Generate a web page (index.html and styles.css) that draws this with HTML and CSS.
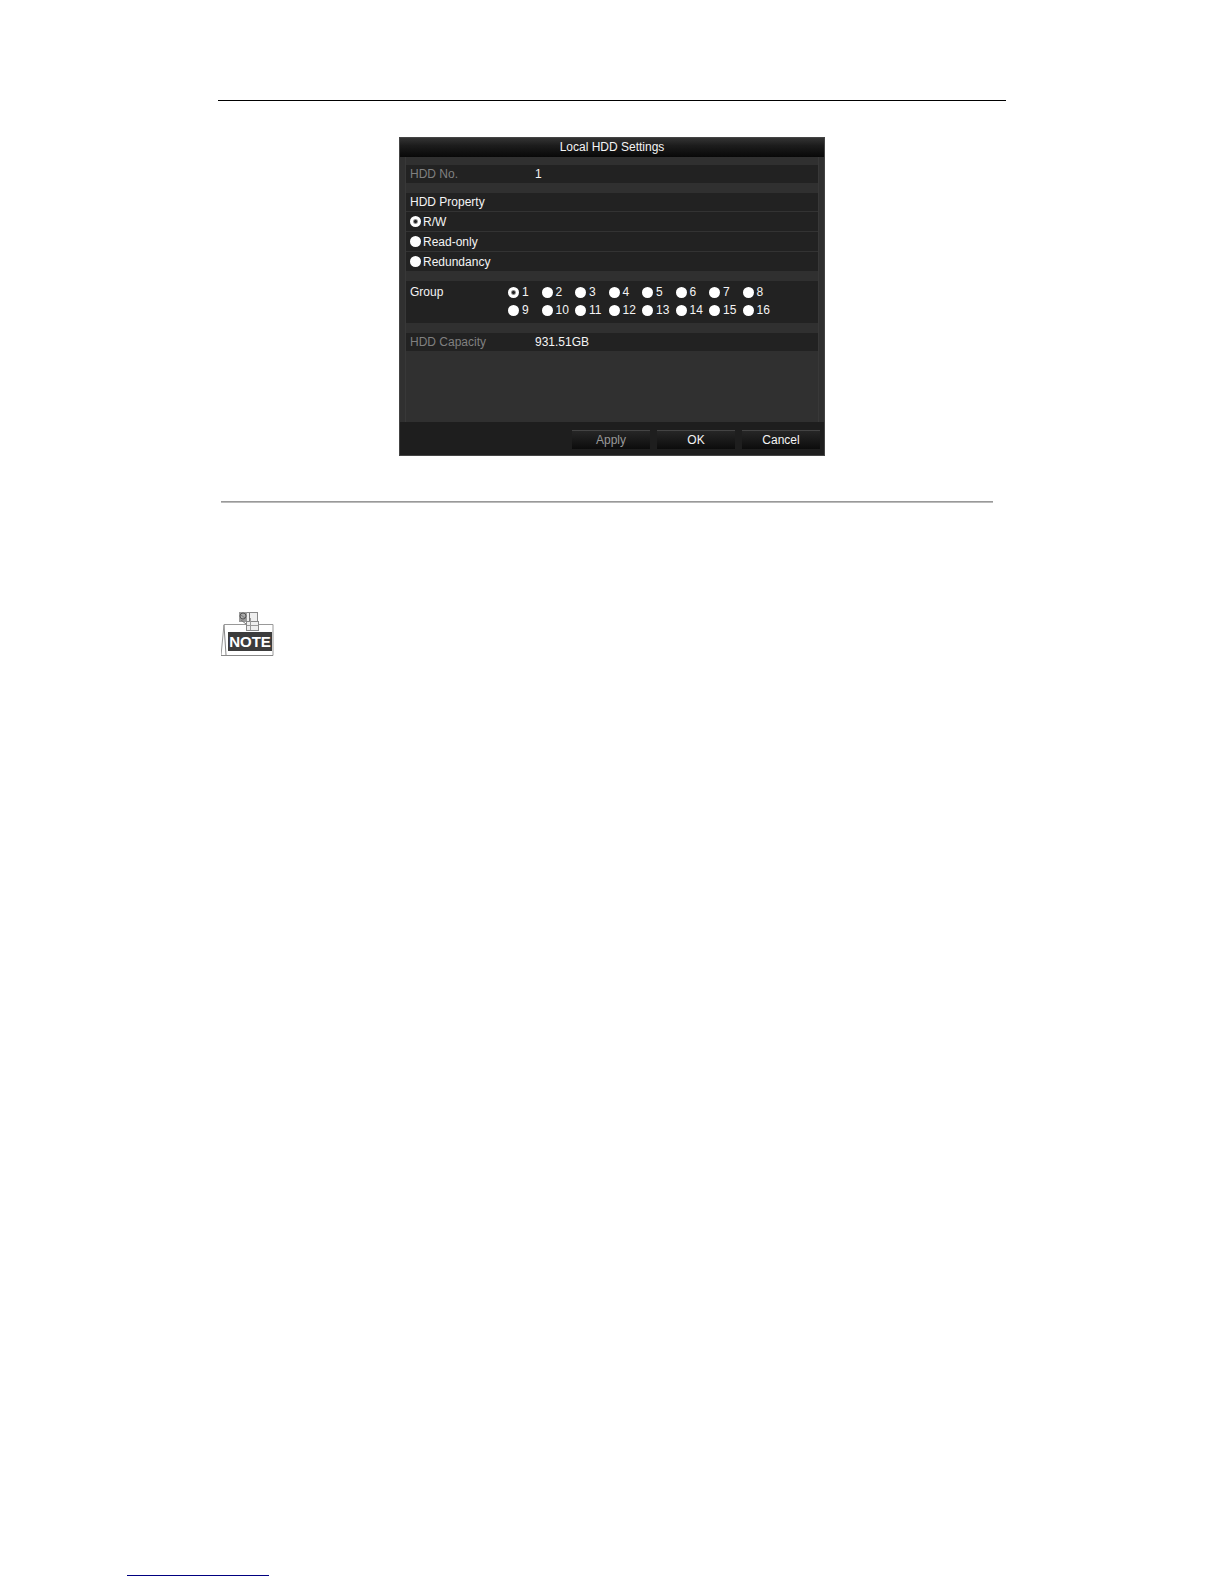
FILE: index.html
```html
<!DOCTYPE html>
<html lang="en">
<head>
    <meta charset="UTF-8">
    <meta name="viewport" content="width=device-width, initial-scale=1.0">
    <title>Local HDD Settings</title>
    <link rel="stylesheet" href="styles.css">
</head>
<body>
    <main class="page">
        <hr class="top-rule">

        <!-- Settings dialog -->
        <form class="dialog">
            <h1 class="dialog-title">Local HDD Settings</h1>

            <div class="dialog-body">
                <div class="panel row">
                    <span class="label muted">HDD No.</span>
                    <span>1</span>
                </div>

                <div class="panel property" role="radiogroup" aria-labelledby="propertyLabel">
                    <div class="row" id="propertyLabel">HDD Property</div>
                    <label class="row"><input type="radio" name="property" checked>R/W</label>
                    <label class="row"><input type="radio" name="property">Read-only</label>
                    <label class="row"><input type="radio" name="property">Redundancy</label>
                </div>

                <div class="panel group" role="radiogroup" aria-labelledby="groupLabel">
                    <span class="group-label" id="groupLabel">Group</span>
                    <div class="group-options">
                        <label><input type="radio" name="group" checked>1</label>
                        <label><input type="radio" name="group">2</label>
                        <label><input type="radio" name="group">3</label>
                        <label><input type="radio" name="group">4</label>
                        <label><input type="radio" name="group">5</label>
                        <label><input type="radio" name="group">6</label>
                        <label><input type="radio" name="group">7</label>
                        <label><input type="radio" name="group">8</label>
                        <label><input type="radio" name="group">9</label>
                        <label><input type="radio" name="group">10</label>
                        <label><input type="radio" name="group">11</label>
                        <label><input type="radio" name="group">12</label>
                        <label><input type="radio" name="group">13</label>
                        <label><input type="radio" name="group">14</label>
                        <label><input type="radio" name="group">15</label>
                        <label><input type="radio" name="group">16</label>
                    </div>
                </div>

                <div class="panel row">
                    <span class="label muted">HDD Capacity</span>
                    <span>931.51GB</span>
                </div>
            </div>

            <div class="dialog-footer">
                <button type="button" disabled>Apply</button>
                <button type="button">OK</button>
                <button type="button">Cancel</button>
            </div>
        </form>

        <hr class="section-rule">

        <!-- Note sign -->
        <svg class="note" width="54" height="46" viewBox="0 0 54 46" role="img" aria-label="Note">
            <path d="M3 13.500H52V44.500H0L3 13.500Z" fill="#fff" stroke="#999"/>
            <path d="M3 14L5 44M0 44.500H52" fill="none" stroke="#888"/>
            <rect x="7" y="21" width="44" height="19" fill="#3c3c3c"/>
            <rect x="18.500" y="1.500" width="18" height="9" fill="#eee" stroke="#888"/>
            <rect x="18" y="1" width="8" height="10" fill="#999"/>
            <circle cx="22" cy="5" r="3" fill="#aaa" stroke="#555"/>
            <path d="M20 4L24 7M28.500 2V10M20 9L25 13" fill="none" stroke="#777"/>
            <rect x="25.500" y="10.500" width="12" height="9" fill="#eee" stroke="#888"/>
            <path d="M29.500 7V19M26 14.500H37" fill="none" stroke="#999"/>
            <text x="29" y="36" text-anchor="middle">NOTE</text>
        </svg>
    </main>

    <footer class="page-footer">
        <hr class="footer-rule">
    </footer>
</body>
</html>
```

FILE: styles.css
```css
body {
    font-family: "Liberation Sans", Arial, sans-serif;
    font-size: 12px;
    line-height: 18px;
    background-color: #fff;
    color: #f4f4f4;
    margin: 0;
    min-height: 100vh;
    display: flex;
    flex-direction: column;
}

hr {
    border: none;
    margin: 0;
}

.page {
    padding: 100px 218px 0;
}

.top-rule {
    height: 1px;
    background-color: #000;
}

/* Dialog */
.dialog {
    box-sizing: border-box;
    max-width: 426px;
    margin: 36px auto 0;
    background-color: #303030;
    border: 1px solid #444;
}

.dialog-title {
    margin: 0;
    font-size: 12px;
    font-weight: normal;
    line-height: 19px;
    text-align: center;
    background: linear-gradient(#333, #1c1c1c 40%, #080808);
}

.dialog-body {
    display: flex;
    flex-direction: column;
    gap: 10px;
    min-height: 257px;
    margin: 0 5px;
    padding-top: 8px;
    border: solid #383838;
    border-width: 0 1px;
}

.panel {
    background-color: #222;
}

.row {
    display: flex;
    align-items: center;
    height: 18px;
    padding-left: 4px;
}

.label {
    width: 125px;
}

.muted {
    color: #808080;
}

.property .row + .row {
    border-top: 1px solid #333;
    height: 19px;
}

input[type="radio"] {
    appearance: none;
    flex: none;
    width: 11px;
    height: 11px;
    margin: 0 2px 0 0;
    border-radius: 50%;
    background-color: #fff;
}

input[type="radio"]:checked {
    background: radial-gradient(circle, #222 1px, #fff 3px);
}

.group {
    display: flex;
    padding: 2px 0 4px 4px;
}

.group-label {
    width: 98px;
}

.group-options {
    display: grid;
    grid-template-columns: repeat(8, 1fr);
    width: 268px;
}

.group-options label {
    display: flex;
    align-items: center;
}

.group-options input[type="radio"] {
    margin-right: 3px;
}

.dialog-footer {
    display: flex;
    justify-content: flex-end;
    gap: 7px;
    padding: 8px 4px 6px;
    background-color: #1e1e1e;
}

button {
    width: 78px;
    height: 19px;
    padding: 0;
    border: none;
    border-top: 1px solid #444;
    background: linear-gradient(#262626, #0c0c0c);
    color: #f4f4f4;
    font-family: inherit;
    font-size: 12px;
}

button:disabled {
    color: #999;
}

/* Rest of the page */
.section-rule {
    height: 2px;
    margin: 45px 13px 0 3px;
    background: linear-gradient(#999 50%, #bbb 50%);
}

.note {
    display: block;
    margin: 108px 0 0 3px;
}

.note text {
    font-size: 15px;
    font-weight: bold;
    fill: #fff;
}

.page-footer {
    margin-top: auto;
    padding: 0 127px 8px;
}

.footer-rule {
    max-width: 142px;
    height: 1px;
    background-color: #000080;
}
```
